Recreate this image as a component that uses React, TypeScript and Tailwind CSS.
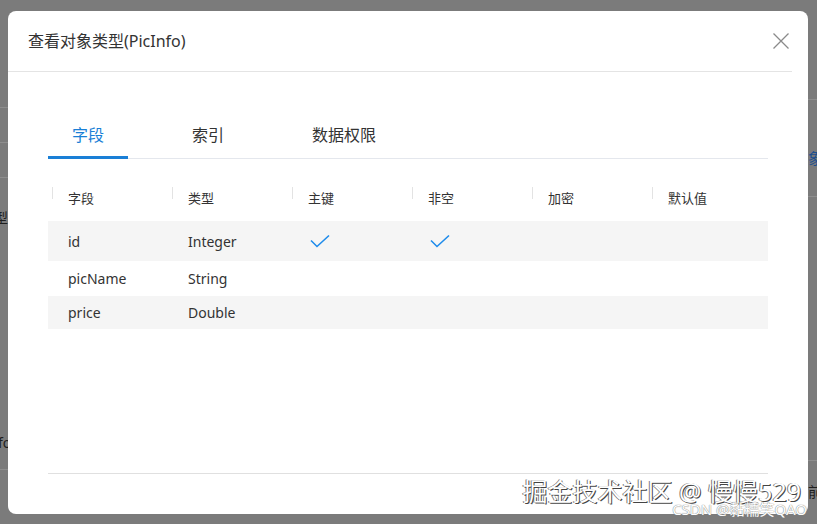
const columns = ['字段', '类型', '主键', '非空', '加密', '默认值'];

const rows = [
  { name: 'id', type: 'Integer', pk: true, notNull: true, h: 'h-[40px]', bg: 'bg-[#f5f5f5]' },
  { name: 'picName', type: 'String', pk: false, notNull: false, h: 'h-[35px]', bg: 'bg-white' },
  { name: 'price', type: 'Double', pk: false, notNull: false, h: 'h-[33px]', bg: 'bg-[#f5f5f5]' },
];

const tabs = ['字段', '索引', '数据权限'];

function Check() {
  return (
    <svg width="24" height="14" viewBox="0 0 24 14" fill="none" className="ml-[20px]">
      <polyline points="3,6.5 9,12.5 21,1.5" stroke="#1f8ceb" strokeWidth="1.6" fill="none" />
    </svg>
  );
}

function CloseIcon() {
  return (
    <svg width="16" height="16" viewBox="0 0 16 16" fill="none">
      <path d="M0.5 0.5 L15.5 15.5 M15.5 0.5 L0.5 15.5" stroke="#8a8a8a" strokeWidth="1.3" />
    </svg>
  );
}

function LeftStrip() {
  return (
    <div className="w-[8px] shrink-0 flex flex-col overflow-hidden">
      <div className="h-[108px] border-b border-[#8e8e8e]" />
      <div className="h-[35px] border-b border-[#8e8e8e]" />
      <div className="h-[35px] border-b border-[#8e8e8e]" />
      <div className="h-[32px]" />
      <div className="h-[16px] text-[14px] leading-[16px] text-[#1e1e1e] -ml-[6px] whitespace-nowrap">型</div>
      <div className="h-[209px]" />
      <div className="h-[16px] text-[14px] leading-[16px] text-[#1e1e1e] -ml-[2px] whitespace-nowrap">fo</div>
      <div className="h-[19px] border-b border-[#8e8e8e]" />
    </div>
  );
}

function RightStrip() {
  return (
    <div className="w-[9px] shrink-0 flex flex-col overflow-hidden">
      <div className="h-[100px] border-b border-[#8e8e8e]" />
      <div className="h-[50px]" />
      <div className="h-[17px] text-[15px] leading-[17px] text-[#1d4f8f] whitespace-nowrap">象</div>
      <div className="h-[30px] border-b border-[#8e8e8e]" />
      <div className="h-[264px] border-b border-[#8e8e8e]" />
      <div className="h-[23px]" />
      <div className="h-[16px] text-[14px] leading-[16px] text-[#1e1e1e] whitespace-nowrap">前</div>
    </div>
  );
}

export default function App() {
  return (
    <div className="relative w-[817px] h-[524px] overflow-hidden bg-[#7b7b7b] font-['Noto_Sans','Noto_Sans_CJK_SC',sans-serif]">
      <div className="flex h-full">
        <LeftStrip />

        <div className="pt-[11px]">
          <div className="w-[800px] h-[503px] bg-white rounded-[8px] flex flex-col">
            {/* header */}
            <div className="h-[61px] mr-[16px] pl-[20px] pr-[3px] border-b border-[#e4e4e4] flex items-center justify-between">
              <span className="text-[16px] text-[#333]">查看对象类型(PicInfo)</span>
              <CloseIcon />
            </div>

            {/* body */}
            <div className="px-[40px] pt-[41px] flex-1 flex flex-col">
              <div className="flex gap-[40px] border-b border-[#e4e7ed]">
                {tabs.map((t, i) => (
                  <div
                    key={t}
                    className={
                      i === 0
                        ? 'px-[24px] h-[46px] flex items-center text-[16px] -mb-px border-b-[3px] border-[#1a7fd6] text-[#1a7fd6]'
                        : 'px-[24px] h-[46px] flex items-center text-[16px] -mb-px border-b-[3px] border-transparent text-[#333]'
                    }
                  >
                    {t}
                  </div>
                ))}
              </div>

              <div className="mt-[18px]">
                <div className="grid grid-cols-6 h-[44px]">
                  {columns.map((c) => (
                    <div key={c} className="flex items-center pl-[4px]">
                      <div className="w-px h-[12px] bg-[#e3e3e3] mb-[13px]" />
                      <span className="ml-[15px] text-[13px] text-[#333]">{c}</span>
                    </div>
                  ))}
                </div>
                {rows.map((r) => (
                  <div key={r.name} className={`grid grid-cols-6 ${r.h} ${r.bg}`}>
                    <div className="flex items-center pl-[20px] text-[14px] text-[#333]">{r.name}</div>
                    <div className="flex items-center pl-[20px] text-[14px] text-[#333]">{r.type}</div>
                    <div className="flex items-center">{r.pk && <Check />}</div>
                    <div className="flex items-center">{r.notNull && <Check />}</div>
                    <div />
                    <div />
                  </div>
                ))}
              </div>

              <div className="flex-1" />
              <div className="border-b border-[#e0e0e0] mb-[40px]" />
            </div>
          </div>
        </div>

        <RightStrip />
      </div>

      {/* watermarks */}
      <div className="absolute right-[16px] top-[476px] text-[25px] leading-[30px] text-white whitespace-nowrap [text-shadow:1px_1px_0_#444,-1px_0_0_#777]">
        掘金技术社区 @ 慢慢529
      </div>
      <div className="absolute right-[10px] top-[500px] text-[15px] leading-[18px] text-white whitespace-nowrap [text-shadow:0_0_1px_#888,0_0_1px_#888]">
        CSDN @黏糯笑QAO
      </div>
    </div>
  );
}
